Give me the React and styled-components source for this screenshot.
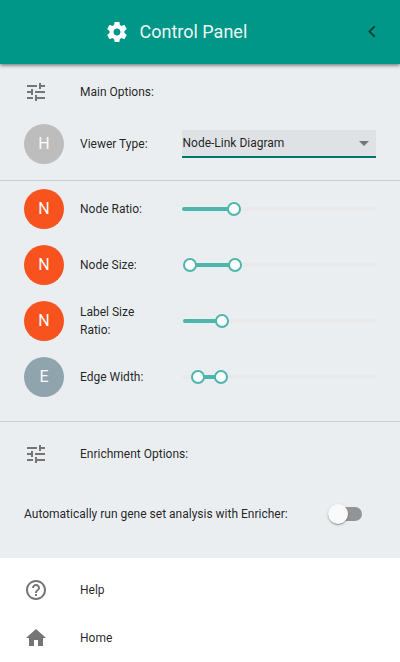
import React from "react";
import styled, { createGlobalStyle } from "styled-components";

const GlobalStyle = createGlobalStyle`
  * { box-sizing: border-box; }
  body {
    margin: 0;
    background: #fff;
    color: rgba(0, 0, 0, 0.87);
    font: 400 12px/18px Roboto, sans-serif;
  }
`;

const Drawer = styled.aside`
  width: 400px;
  height: 662px;
  overflow: hidden;
  background: #fff;
`;

const Header = styled.header`
  position: relative;
  display: grid;
  grid-template-columns: 105px 34px 1fr 24px;
  align-items: center;
  height: 64px;
  padding-right: 16px;
  background: #009788;
  color: #fff;
  box-shadow: 0 1px 4px rgba(0, 0, 0, 0.36), 0 2px 3px rgba(0, 0, 0, 0.2);
`;

const Title = styled.h1`
  grid-column: 3;
  margin: 0;
  padding-left: 0.5px;
  color: rgba(255, 255, 255, 0.94);
  font-size: 18px;
  font-weight: 400;
  line-height: 24px;
`;

const Icon = styled.svg`
  display: block;
  width: 24px;
  height: 24px;
  fill: ${(p) => p.$color || "#757575"};
`;

const GearIcon = styled(Icon)`
  grid-column: 2;
`;

const Options = styled.main`
  height: 494px;
  background: #eaeef1;
`;

const Section = styled.section`
  padding: ${(p) => p.$padding};
  border-bottom: ${(p) => (p.$divided ? "1px solid #c9ced1" : "none")};
`;

const Row = styled.div`
  display: grid;
  grid-template-columns: 56px 102px 194px;
  align-items: center;
  height: ${(p) => p.$height || 56}px;
  padding-left: 24px;
`;

const HeadingRow = styled.div`
  display: grid;
  grid-template-columns: 56px 1fr;
  align-items: center;
  height: 48px;
  padding: 0 24px;
`;

const Label = styled.span`
  max-width: ${(p) => (p.$narrow ? "70px" : "none")};
`;

const Avatar = styled.div`
  display: grid;
  place-items: center;
  width: 40px;
  height: 40px;
  border-radius: 50%;
  background: ${(p) => p.$color};
  color: #fafafa;
  font-size: 16px;
`;

const Select = styled.div`
  display: flex;
  align-items: center;
  justify-content: space-between;
  height: 28px;
  padding: 0 0 0 0.5px;
  background: #dfe2e5;
  border-bottom: 2px solid #00796b;
`;

const Rail = styled.div`
  position: relative;
  height: 4px;
  border-radius: 4px;
  background: #e9e9e9;
`;

const Range = styled.div`
  position: absolute;
  top: 0;
  height: 4px;
  border-radius: 4px;
  background: #4db6ac;
`;

const Handle = styled.div`
  position: absolute;
  top: -5px;
  width: 14px;
  height: 14px;
  margin-left: -7px;
  border: 2px solid #4db6ac;
  border-radius: 50%;
  background: #fff;
`;

const SwitchRow = styled.div`
  display: flex;
  align-items: center;
  justify-content: space-between;
  height: 72px;
  padding: 0 38px 0 24px;
`;

const SwitchTrack = styled.div`
  position: relative;
  width: 34px;
  height: 14px;
  border-radius: 7px;
  background: #929495;
`;

const SwitchThumb = styled.div`
  position: absolute;
  top: -3px;
  left: 0;
  width: 20px;
  height: 20px;
  border-radius: 50%;
  background: #fafafa;
  box-shadow: 0 1px 3px rgba(0, 0, 0, 0.2), 0 1px 1px rgba(0, 0, 0, 0.14),
    0 2px 1px -1px rgba(0, 0, 0, 0.12);
`;

const Menu = styled.nav`
  padding-top: 8px;
`;

const PATHS = {
  gear: "M19.43 12.98c.04-.32.07-.64.07-.98s-.03-.66-.07-.98l2.11-1.65c.19-.15.24-.42.12-.64l-2-3.46c-.12-.22-.39-.3-.61-.22l-2.49 1c-.52-.4-1.08-.73-1.69-.98l-.38-2.65C14.46 2.18 14.25 2 14 2h-4c-.25 0-.46.18-.49.42l-.38 2.65c-.61.25-1.17.59-1.69.98l-2.49-1c-.23-.09-.49 0-.61.22l-2 3.46c-.13.22-.07.49.12.64l2.11 1.65c-.04.32-.07.65-.07.98s.03.66.07.98l-2.11 1.65c-.19.15-.24.42-.12.64l2 3.46c.12.22.39.3.61.22l2.49-1c.52.4 1.08.73 1.69.98l.38 2.65c.03.24.24.42.49.42h4c.25 0 .46-.18.49-.42l.38-2.65c.61-.25 1.17-.59 1.69-.98l2.49 1c.23.09.49 0 .61-.22l2-3.46c.12-.22.07-.49-.12-.64l-2.11-1.65zM12 15.5c-1.93 0-3.5-1.57-3.5-3.5s1.57-3.5 3.5-3.5 3.5 1.57 3.5 3.5-1.57 3.5-3.5 3.5z",
  back: "M15.41 16.09l-4.58-4.59 4.58-4.59L14 5.5l-6 6 6 6z",
  tune: "M3 17v2h6v-2H3zM3 5v2h10V5H3zm10 16v-2h8v-2h-8v-2h-2v6h2zM7 9v2H3v2h4v2h2V9H7zm14 4v-2H11v2h10zm-6-4h2V7h4V5h-4V3h-2v6z",
  down: "M7 10l5 5 5-5z",
  help: "M11 18h2v-2h-2v2zm1-16C6.48 2 2 6.48 2 12s4.48 10 10 10 10-4.48 10-10S17.52 2 12 2zm0 18c-4.41 0-8-3.59-8-8s3.59-8 8-8 8 3.59 8 8-3.59 8-8 8zm0-14c-2.21 0-4 1.79-4 4h2c0-1.1.9-2 2-2s2 .9 2 2c0 2-3 1.75-3 5h2c0-2.25 3-2.5 3-5 0-2.21-1.79-4-4-4z",
  home: "M10 20v-6h4v6h5v-8h3L12 3 2 12h3v8z",
};

function Glyph({ name, as: Component = Icon, color }) {
  return (
    <Component viewBox="0 0 24 24" $color={color} aria-hidden="true">
      <path d={PATHS[name]} />
    </Component>
  );
}

function Slider({ start, handles }) {
  const end = handles[handles.length - 1];
  return (
    <Rail>
      <Range style={{ left: start, width: end - start }} />
      {handles.map((x) => (
        <Handle key={x} style={{ left: x }} />
      ))}
    </Rail>
  );
}

const SLIDERS = [
  { letter: "N", color: "#f8531e", label: "Node Ratio:", start: 0, handles: [52] },
  { letter: "N", color: "#f8531e", label: "Node Size:", start: 8, handles: [8, 53] },
  { letter: "N", color: "#f8531e", label: "Label Size Ratio:", start: 1, handles: [40] },
  { letter: "E", color: "#90a4ae", label: "Edge Width:", start: 16, handles: [16, 39] },
];

function Heading({ icon, children }) {
  return (
    <HeadingRow>
      <Glyph name={icon} />
      <Label>{children}</Label>
    </HeadingRow>
  );
}

export default function App() {
  return (
    <>
      <GlobalStyle />
      <Drawer>
        <Header>
          <Glyph name="gear" as={GearIcon} color="#fff" />
          <Title>Control Panel</Title>
          <Glyph name="back" color="rgba(0, 0, 0, 0.54)" />
        </Header>
        <Options>
          <Section $padding="4px 0 8px" $divided>
            <Heading icon="tune">Main Options:</Heading>
            <Row>
              <Avatar $color="#bdbdbd">H</Avatar>
              <Label>Viewer Type:</Label>
              <Select>
                Node-Link Diagram
                <Glyph name="down" />
              </Select>
            </Row>
          </Section>
          <Section $padding="0 0 16px" $divided>
            {SLIDERS.map((s) => (
              <Row key={s.label}>
                <Avatar $color={s.color}>{s.letter}</Avatar>
                <Label $narrow>{s.label}</Label>
                <Slider start={s.start} handles={s.handles} />
              </Row>
            ))}
          </Section>
          <Section $padding="8px 0 0">
            <Heading icon="tune">Enrichment Options:</Heading>
            <SwitchRow>
              <Label>Automatically run gene set analysis with Enricher:</Label>
              <SwitchTrack>
                <SwitchThumb />
              </SwitchTrack>
            </SwitchRow>
          </Section>
        </Options>
        <Menu>
          <Heading icon="help">Help</Heading>
          <Heading icon="home">Home</Heading>
        </Menu>
      </Drawer>
    </>
  );
}
